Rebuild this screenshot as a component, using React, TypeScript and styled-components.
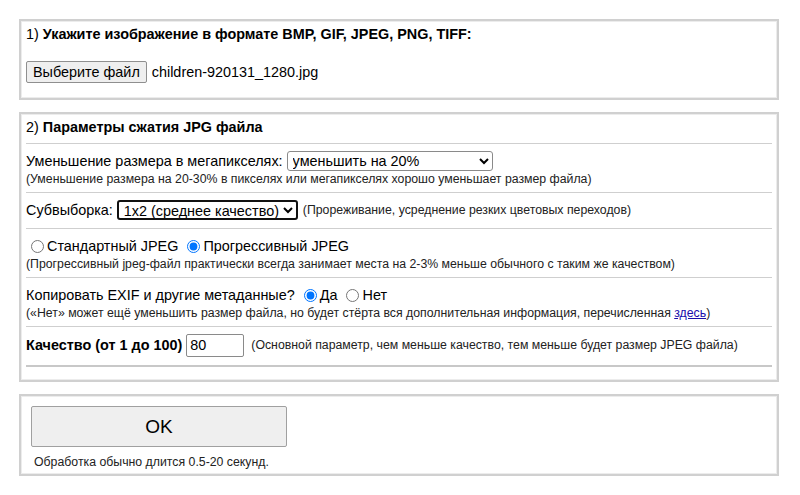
import React from "react";
import styled, { createGlobalStyle } from "styled-components";

const Global = createGlobalStyle`
  html, body { margin: 0; padding: 0; background: #fff; }
  body { font-family: "Liberation Sans", Arial, sans-serif; color: #000; font-size: 14.4px; }
  * { box-sizing: border-box; }
`;

const Page = styled.div`
  padding: 19px 21px 19px 19px;
  display: flex;
  flex-direction: column;
  gap: 12px;
  width: 800px;
`;

const Box = styled.div<{ $pad?: string }>`
  border: 2px solid #d0d0d0;
  box-shadow: inset 0 0 0 1px #ececec;
  padding: ${(p) => p.$pad || "4px 5px"};
  display: flex;
  flex-direction: column;
`;

const Heading = styled.div<{ $mb?: number }>`
  font-size: 14.4px;
  line-height: 17px;
  margin-bottom: ${(p) => p.$mb ?? 0}px;
  b { font-weight: bold; }
`;

const FileRow = styled.div`
  display: flex;
  align-items: center;
  gap: 5px;
  margin-top: 18px;
  margin-bottom: 15px;
  font-size: 14.4px;
`;

const FileButton = styled.button`
  font-family: "Liberation Sans", Arial, sans-serif;
  font-size: 14.4px;
  height: 22px;
  padding: 0 6px;
  background: #efefef;
  border: 1px solid #8f8f8f;
  border-radius: 2px;
  color: #000;
`;

const Section = styled.div<{ $pb?: number }>`
  border-top: 1px solid #cfcfcf;
  padding: 6px 0 ${(p) => p.$pb ?? 5}px;
  font-size: 14.4px;
  line-height: 17px;
`;

const EndLine = styled.div`
  border-top: 2px solid #c8c8c8;
  margin-bottom: 13px;
`;

const Line = styled.div<{ $h?: number }>`
  display: flex;
  align-items: center;
  gap: 4px;
  min-height: ${(p) => p.$h ?? 22}px;
  white-space: nowrap;
`;

const Note = styled.div<{ $inline?: boolean }>`
  display: ${(p) => (p.$inline ? "inline" : "block")};
  margin-left: ${(p) => (p.$inline ? 1 : 0)}px;
  font-size: 12.3px;
  line-height: 15px;
  color: #222;
  white-space: nowrap;
  a { color: #1a0dab; text-decoration: underline; }
`;

const Select = styled.select<{ $w: number; $dark?: boolean }>`
  font-family: "Liberation Sans", Arial, sans-serif;
  font-size: 14.4px;
  height: 20px;
  width: ${(p) => p.$w}px;
  border: ${(p) => (p.$dark ? "2px solid #111" : "1px solid #8a8a8a")};
  border-radius: 3px;
  background: #fff;
  color: #000;
  padding: 0 1px;
`;

const Radio = styled.label`
  display: inline-flex;
  align-items: center;
  input { margin: 0 3px 0 5px; width: 13px; height: 13px; accent-color: #0075ff; }
`;

const QInput = styled.input`
  font-family: "Liberation Sans", Arial, sans-serif;
  font-size: 14.4px;
  width: 58px;
  height: 23px;
  border: 1px solid #8a8a8a;
  border-radius: 2px;
  padding: 0 3px;
  margin: 0 2px 0 0;
`;

const OkButton = styled.button`
  font-family: "Liberation Sans", Arial, sans-serif;
  font-size: 19px;
  width: 256px;
  height: 41px;
  background: #efefef;
  border: 1px solid #a0a0a0;
  border-radius: 2px;
  color: #000;
  margin: 10px 0 0 10px;
`;

const OkNote = styled.div`
  font-size: 12.3px;
  line-height: 14px;
  color: #222;
  margin: 8px 0 5px 13px;
`;

export default function App() {
  return (
    <>
      <Global />
      <Page>
        <Box $pad="5px 5px 0">
          <Heading>
            1) <b>Укажите изображение в формате BMP, GIF, JPEG, PNG, TIFF:</b>
          </Heading>
          <FileRow>
            <FileButton>Выберите файл</FileButton>
            <span>children-920131_1280.jpg</span>
          </FileRow>
        </Box>
        <Box $pad="5px 5px 0">
          <Heading $mb={7}>
            2) <b>Параметры сжатия JPG файла</b>
          </Heading>
          <Section>
            <Line>
              Уменьшение размера в мегапикселях:
              <Select $w={206} defaultValue="20">
                <option value="20">уменьшить на 20%</option>
              </Select>
            </Line>
            <Note>
              (Уменьшение размера на 20-30% в пикселях или мегапикселях хорошо уменьшает размер файла)
            </Note>
          </Section>
          <Section $pb={7}>
            <Line>
              Субвыборка:
              <Select $w={181} $dark defaultValue="1x2">
                <option value="1x2">1x2 (среднее качество)</option>
              </Select>
              <Note $inline>(Прореживание, усреднение резких цветовых переходов)</Note>
            </Line>
          </Section>
          <Section>
            <Line>
              <Radio>
                <input type="radio" name="p" />Стандартный JPEG
              </Radio>
              <Radio>
                <input type="radio" name="p" defaultChecked />Прогрессивный JPEG
              </Radio>
            </Line>
            <Note>
              (Прогрессивный jpeg-файл практически всегда занимает места на 2-3% меньше обычного с таким же качеством)
            </Note>
          </Section>
          <Section>
            <Line>
              Копировать EXIF и другие метаданные?
              <Radio>
                <input type="radio" name="e" defaultChecked />Да
              </Radio>
              <Radio>
                <input type="radio" name="e" />Нет
              </Radio>
            </Line>
            <Note>
              («Нет» может ещё уменьшить размер файла, но будет стёрта вся дополнительная информация, перечисленная{" "}
              <a href="#">здесь</a>)
            </Note>
          </Section>
          <Section $pb={8}>
            <Line $h={24}>
              <b>Качество (от 1 до 100)</b>
              <QInput defaultValue="80" />
              <Note $inline>(Основной параметр, чем меньше качество, тем меньше будет размер JPEG файла)</Note>
            </Line>
          </Section>
          <EndLine />
        </Box>
        <Box $pad="0">
          <div>
            <OkButton>OK</OkButton>
          </div>
          <OkNote>Обработка обычно длится 0.5-20 секунд.</OkNote>
        </Box>
      </Page>
    </>
  );
}
